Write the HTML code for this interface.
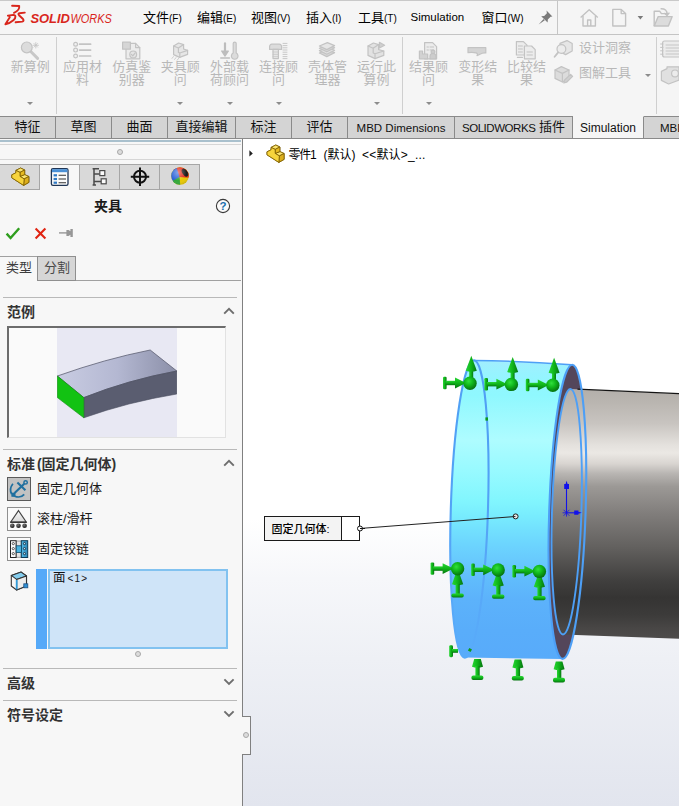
<!DOCTYPE html>
<html lang="zh-CN">
<head>
<meta charset="utf-8">
<title>SOLIDWORKS</title>
<style>
html,body{margin:0;padding:0;}
body{width:679px;height:806px;overflow:hidden;position:relative;background:#f0f0f0;
 font-family:"Liberation Sans","Noto Sans CJK SC",sans-serif;font-size:13px;color:#1a1a1a;}
.abs{position:absolute;}
.t{position:absolute;white-space:nowrap;line-height:1;}
/* title bar */
#titlebar{left:0;top:0;width:679px;height:35px;background:#f5f5f5;border-top:1px solid #c9c9c9;border-bottom:1px solid #c4c4c4;box-sizing:border-box;}
.menu{font-size:13px;color:#000;top:11px;}
.menu small{font-size:10px;}
/* ribbon */
#ribbon{left:0;top:35px;width:679px;height:82px;background:#f5f5f5;}
.rb{color:#b8b8b8;font-size:13px;text-align:center;line-height:12.6px;white-space:normal;}
.dd{width:0;height:0;border-left:3px solid transparent;border-right:3px solid transparent;border-top:3.5px solid #8c8c8c;}
.vsep{width:1px;background:#cfcfcf;}
/* tabs */
#tabs{left:0;top:116px;width:679px;height:23px;background:#f5f5f5;z-index:3;}
.tab{position:absolute;top:0;height:23px;box-sizing:border-box;background:#d4d4d4;border:1px solid #8a8a8a;border-left:none;text-align:center;font-size:13px;line-height:20px;color:#111;white-space:nowrap;overflow:hidden;}
.en{font-size:11.5px;position:relative;top:0.8px;}
.tab.act{background:#f5f5f5;border-top-color:#f5f5f5;}
/* panel */
#panel{left:0;top:138px;width:242px;height:668px;z-index:0;background:#f7f7f7;}
.hl{position:absolute;height:1px;background:#b9b9b9;}
.bold{font-weight:bold;color:#333;}
#view{left:243px;top:138px;width:436px;height:668px;background:linear-gradient(#ffffff 0%,#ffffff 57%,#f6f7fa 66%,#eef0f5 78%,#e2e5ee 100%);}
</style>
</head>
<body>
<!-- TITLE BAR -->
<div id="titlebar" class="abs"></div>
<svg class="abs" style="left:0;top:0" width="130" height="35" viewBox="0 0 130 35">
 <g fill="none" stroke="#d9261c" stroke-width="1.9" stroke-linecap="round" stroke-linejoin="round">
  <path d="M12.1 5.8 L19.2 6.0 C19.6 8.6 17.2 11.4 14 12.8"/>
  <path d="M7.9 15.7 L13.3 14.9 C16 15 16.2 17.8 13.4 20.2 C11 22.2 7.8 23.8 5.4 24.3 L9.8 17.2"/>
  <path d="M24.8 12.6 L19.4 13.2 C18.2 13.4 18.2 14.4 19 15.2 L23 19 C24 20.2 23.6 21.3 22.2 21.6 L15.6 22.3"/>
 </g>
 <text x="30.4" y="23" font-family="Liberation Sans, sans-serif" font-size="13" font-weight="bold" font-style="italic" fill="#d9261c" textLength="39.6" lengthAdjust="spacingAndGlyphs">SOLID</text>
 <text x="70.4" y="23" font-family="Liberation Sans, sans-serif" font-size="13" font-style="italic" fill="#d9261c" textLength="41.4" lengthAdjust="spacingAndGlyphs">WORKS</text>
</svg>
<span class="t menu" style="left:143px">文件<small>(F)</small></span>
<span class="t menu" style="left:197px">编辑<small>(E)</small></span>
<span class="t menu" style="left:251px">视图<small>(V)</small></span>
<span class="t menu" style="left:306px">插入<small>(I)</small></span>
<span class="t menu" style="left:358px">工具<small>(T)</small></span>
<span class="t menu" style="left:410.5px;font-size:11.5px;top:12px">Simulation</span>
<span class="t menu" style="left:481.5px">窗口<small>(W)</small></span>
<svg class="abs" style="left:536px;top:8px" width="20" height="20" viewBox="0 0 20 20">
 <g fill="#7a7a7a" stroke="none"><path d="M10.5 2.6 L16.4 8.4 L14.6 8.8 L11.8 11.6 L11.6 14.6 L5.2 8.2 L8.2 8 L10.9 5.2 Z"/><path d="M7.6 11 L8.8 12.2 L2.6 16.4 Z"/></g>
</svg>
<div class="abs" style="left:557px;top:1px;width:1px;height:33px;background:#c6c6c6"></div>
<svg class="abs" style="left:576px;top:6px" width="103" height="24" viewBox="0 0 103 24">
 <g fill="none" stroke="#c2c2c2" stroke-width="1.4" stroke-linejoin="round">
  <path d="M4.6 11.4 L13.2 3.8 L21.8 11.4"/><path d="M7 10 V20 H19.4 V10"/><path d="M11.6 20 V14 H14.8 V20"/>
  <path d="M36.8 3.4 H45.2 L49.6 7.6 V20 H36.8 Z"/><path d="M45.2 3.4 V7.6 H49.6"/>
  <path d="M78.2 20 V5.2 H83.6 L85.4 7.6 H92"/><path d="M78.2 20 L82.2 10.6 H96.2 L92.4 20 Z" fill="#dcdcdc"/>
  <path d="M84.6 2.8 C89 2.6 91.2 4.6 91 8.4" /><path d="M88.4 7 L91 9.6 L93.4 6.6" />
 </g>
 <path d="M61.6 10 L67.2 10 L64.4 13.4 Z" fill="#7a7a7a"/>
</svg>
<!-- RIBBON -->
<div id="ribbon" class="abs"></div>
<div class="abs rb" style="left:0.3px;top:61px;width:60px">新算例</div>
<div class="abs dd" style="left:27.3px;top:101.5px"></div>
<div class="abs rb" style="left:52.5px;top:61px;width:60px">应用材<br>料</div>
<div class="abs rb" style="left:101.7px;top:61px;width:60px">仿真鉴<br>别器</div>
<div class="abs rb" style="left:150.3px;top:61px;width:60px">夹具顾<br>问</div>
<div class="abs dd" style="left:177.3px;top:101.5px"></div>
<div class="abs rb" style="left:199.5px;top:61px;width:60px">外部载<br>荷顾问</div>
<div class="abs dd" style="left:226.5px;top:101.5px"></div>
<div class="abs rb" style="left:248.6px;top:61px;width:60px">连接顾<br>问</div>
<div class="abs dd" style="left:275.6px;top:101.5px"></div>
<div class="abs rb" style="left:297.4px;top:61px;width:60px">壳体管<br>理器</div>
<div class="abs rb" style="left:346.5px;top:61px;width:60px">运行此<br>算例</div>
<div class="abs dd" style="left:373.5px;top:101.5px"></div>
<div class="abs rb" style="left:398.6px;top:61px;width:60px">结果顾<br>问</div>
<div class="abs dd" style="left:425.6px;top:101.5px"></div>
<div class="abs rb" style="left:447.7px;top:61px;width:60px">变形结<br>果</div>
<div class="abs rb" style="left:496.5px;top:61px;width:60px">比较结<br>果</div>
<div class="abs vsep" style="left:56px;top:37px;height:77px"></div>
<div class="abs vsep" style="left:402px;top:37px;height:77px"></div>
<div class="abs vsep" style="left:656px;top:37px;height:77px"></div>
<div class="abs rb" style="left:579px;top:41.5px;text-align:left;white-space:nowrap">设计洞察</div>
<div class="abs rb" style="left:579px;top:67px;text-align:left;white-space:nowrap">图解工具</div>
<div class="abs dd" style="left:644.5px;top:73.5px"></div>
<svg class="abs" style="left:0;top:36px" width="679" height="56" viewBox="0 36 679 56">
<g fill="#e0e0e0" stroke="#c3c3c3" stroke-width="1.2" stroke-linejoin="round" stroke-linecap="round">
 <!-- 1 magnifier -->
 <path d="M31 51.8 L37.6 58.4" stroke-width="3" stroke="#c8c8c8"/>
 <circle cx="26.8" cy="47.4" r="5.4" fill="#dcdcdc"/>
 <path d="M35.8 42.6 V48 M33.1 45.3 H38.5 M34 43.5 L37.6 47.1 M37.6 43.5 L34 47.1" stroke-width="0.8"/>
 <!-- 2 list -->
 <circle cx="75.6" cy="44.2" r="1.9" fill="#f1f1f1"/><circle cx="75.6" cy="50.1" r="1.9" fill="#f1f1f1"/><circle cx="75.6" cy="56" r="1.9" fill="#f1f1f1"/>
 <path d="M79.6 44.2 H90.6 M79.6 50.1 H90.6 M79.6 56 H90.6" stroke-width="1.7"/>
 <!-- 3 doc check -->
 <path d="M126 43.4 H135.6 L139.8 47.6 V58.8 H126 Z" fill="#ececec"/>
 <path d="M135.6 43.4 V47.6 H139.8" fill="none"/>
 <rect x="122.6" y="42.2" width="7.8" height="7" fill="#d6d6d6"/>
 <circle cx="133.2" cy="54.4" r="3.4" fill="#e4e4e4"/><path d="M131.4 54.4 L132.8 55.9 L135.2 52.8" fill="none"/>
 <!-- 4 bracket -->
 <path d="M173.6 46 L178.6 43 L183.6 44.6 V49 L187.6 50.4 V54.4 L179.6 57.4 L173.6 54.6 Z" fill="#e6e6e6"/>
 <path d="M173.6 46 L178.4 48 L183.6 44.6 M178.4 48 V52.4 L179.8 53 L187.6 50.4 M179.8 53 V57.4" fill="none"/>
 <path d="M173.4 56.6 L172 58.4 M176 57.6 L174.6 59.4 M178.6 58.4 L177.2 60.2" stroke-width="0.8"/>
 <!-- 5 arrow + thermo -->
 <path d="M225 43.4 V52" stroke-width="2.2" stroke="#bdbdbd"/><path d="M221.6 51 H228.4 L225 56.2 Z" fill="#bdbdbd" stroke="#bdbdbd"/><path d="M220.8 58 H229.4" stroke-width="1.6" stroke="#bdbdbd"/>
 <path d="M233.2 43.6 a1.5 1.5 0 0 1 3 0 V53 a3.3 3.3 0 1 1 -3 0 Z" fill="#dcdcdc"/>
 <!-- 6 bolt -->
 <path d="M269.6 46.4 a2.2 2.2 0 0 1 2.2 -2.2 H279.4 a2.2 2.2 0 0 1 2.2 2.2 V49.4 H269.6 Z" fill="#dcdcdc"/>
 <rect x="273" y="49.4" width="5.4" height="9.2" fill="#e6e6e6"/>
 <path d="M273 52 H278.4 M273 54.4 H278.4 M273 56.6 H278.4" stroke-width="0.7"/>
 <path d="M283 43.4 H287 M283 45.6 H287 M283 47.8 H287 M283 50 H287 M283 52.2 H287 M283 54.4 H287 M283 56.6 H287 M283 58.6 H287" stroke-width="0.9"/>
 <!-- 7 layers -->
 <path d="M319.4 53 L327.4 49.6 L334.6 52.6 L326.8 56.6 Z" fill="#d8d8d8"/>
 <path d="M319.4 50.6 L327.4 47.2 L334.6 50.2 L326.8 54.2 Z" fill="#e2e2e2"/>
 <path d="M319.4 48.2 L327.4 44.8 L334.6 47.8 L326.8 51.8 Z" fill="#d8d8d8"/>
 <path d="M319.4 46 L327.4 42.6 L334.6 45.6 L326.8 49.6 Z" fill="#e6e6e6"/>
 <!-- 8 run -->
 <path d="M368 46 L373.4 43 L378.6 44.6 V49.6 L383.8 51 V55.4 L375 58.6 L368 55.4 Z" fill="#e2e2e2"/>
 <path d="M368 46 L373.2 48.2 L378.6 44.6 M373.2 48.2 V53 L375 53.8 L383.8 51 M375 53.8 V58.6" fill="none"/>
 <path d="M379.4 42.4 L384.6 45.2 L379.4 48 Z" fill="#cfcfcf"/>
 <!-- 9 results -->
 <path d="M424.6 42.6 H432.6 L436.6 46.6 V58.8 H424.6 Z" fill="#ececec"/>
 <path d="M427 47 H428.4 M430 47 H433.6 M427 50 H428.4 M430 50 H433.6" stroke-width="1"/>
 <path d="M419.4 51 H422.6 V54 H427.6 V58.8 H419.4 Z" fill="#d2d2d2"/>
 <circle cx="433" cy="52" r="1.9" fill="#cdcdcd"/><path d="M430 58.8 V56.4 a3 3 0 0 1 6 0 V58.8 Z" fill="#cdcdcd"/>
 <!-- 10 deformed -->
 <path d="M468 47.6 H485.8 V53 C481 52.6 479.6 55 477 55.6 C478.6 53 476 52 468 52.6 Z" fill="#d4d4d4"/>
 <!-- 11 compare -->
 <path d="M516.4 41.6 H523.4 L527 45.2 V55 H516.4 Z" fill="#ececec"/>
 <path d="M524.4 46 H531.6 L535.2 49.6 V58.8 H524.4 Z" fill="#ececec"/>
 <path d="M518.4 46 H522.4 M518.4 49 H522.4 M518.4 52 H522.4 M527 52 H532.4 M527 55 H532.4" stroke-width="1"/>
 <path d="M517.4 57.4 H522.4" stroke-width="1.2"/>
 <!-- small 1 -->
 <path d="M560 43.4 L567 40.6 L572.2 43.6 V51 L565.6 54.6 L560 51.6 Z" fill="#e6e6e6"/>
 <circle cx="561.4" cy="49" r="4.4" fill="#ececec"/><path d="M558.2 52.4 L554.6 56.8" stroke-width="1.8"/>
 <!-- small 2 -->
 <path d="M555 70 L561.4 66.6 L569 70 V78.6 L562.4 82 L555 78.4 Z" fill="#dcdcdc"/>
 <path d="M555 70 L562.4 73.4 L569 70 M562.4 73.4 V82" fill="none"/>
 <path d="M564.6 80 L570.6 74.4 L572.6 76.4 L566.6 82.2 L563.8 83 Z" fill="#d0d0d0"/>
 <!-- right -->
 <rect x="662.6" y="41" width="20" height="16" rx="2" fill="#ececec"/>
 <path d="M666 45 H679 M666 48 H679 M666 51 H679 M666 54 H679" stroke-width="0.9"/>
 <path d="M660.6 44 H663 M660.6 47.4 H663 M660.6 50.8 H663 M660.6 54.2 H663" stroke-width="1"/>
 <path d="M661.4 71.4 L667 68.6 V66.8 H679 V80 L668.6 84 L661.4 80.4 Z" fill="#e0e0e0"/>
 <circle cx="675" cy="73.4" r="3.4" fill="#ececec"/>
</g>
</svg>
<!-- TABS -->
<div id="tabs" class="abs">
<div class="tab" style="left:0px;width:56px">特征</div>
<div class="tab" style="left:56px;width:56px">草图</div>
<div class="tab" style="left:112px;width:56px">曲面</div>
<div class="tab" style="left:168px;width:68px">直接编辑</div>
<div class="tab" style="left:236px;width:56px">标注</div>
<div class="tab" style="left:292px;width:56px">评估</div>
<div class="tab" style="left:348px;width:107px"><span class="en">MBD Dimensions</span></div>
<div class="tab" style="left:455px;width:118px"><span class="en" style="letter-spacing:-0.45px">SOLIDWORKS</span> 插件</div>
<div class="tab act" style="left:573px;width:71px"><span class="en" style="font-size:12px">Simulation</span></div>
<div class="tab" style="left:644px;width:60px;text-align:left;padding-left:16px"><span class="en">MBD</span></div>
</div>
<!-- PANEL -->
<div id="panel" class="abs">
 <div class="abs" style="left:0;top:2px;width:241px;height:2px;background:#a9c0cd"></div>
 <div class="hl" style="left:0;top:6px;width:241px;background:#d6d6d6"></div>
 <div class="hl" style="left:0;top:21px;width:241px;background:#d6d6d6"></div>
 <div class="abs" style="left:117px;top:11px;width:5px;height:5px;border-radius:50%;background:#dcdcdc;border:1px solid #a8a8a8;box-sizing:border-box;width:6px;height:6px"></div>
 <!-- panel tabs -->
 <div class="abs" style="left:0;top:26px;width:200px;height:26px;background:#d9d9d9;border:1px solid #a6a6a6;border-left:none;box-sizing:border-box"></div>
 <div class="abs" style="left:39px;top:27px;width:1px;height:24px;background:#a6a6a6"></div>
 <div class="abs" style="left:119px;top:27px;width:1px;height:24px;background:#a6a6a6"></div>
 <div class="abs" style="left:159px;top:27px;width:1px;height:24px;background:#a6a6a6"></div>
 <div class="hl" style="left:0;top:51px;width:241px;background:#a6a6a6"></div>
 <div class="abs" style="left:39px;top:26px;width:41px;height:26px;background:#f7f7f7;border:1px solid #a6a6a6;border-bottom:none;box-sizing:border-box"></div>
 <svg class="abs" style="left:0;top:26px" width="200" height="26" viewBox="0 164 200 26">
  <!-- part icon -->
  <g stroke="#7a5c00" stroke-width="0.8" stroke-linejoin="round">
   <path d="M11.8 174.8 L15.9 172.8 V170.4 L20.6 168 L24.7 170 V174.6 L28.9 176.5 V182.4 L23.6 185.4 L11.8 177.8 Z" fill="#f3c824"/>
   <path d="M15.9 170.4 L20.6 168 L24.7 170 L20 172.4 Z" fill="#fbe46e"/>
   <path d="M20 176.4 L24.7 174.6 L28.9 176.5 L24.2 178.9 Z" fill="#fbe46e"/>
   <path d="M24.2 178.9 L28.9 176.5 V182.4 L23.6 185.4 Z" fill="#dcae1c"/>
   <path d="M20 172.4 L24.7 170 V174.6 L20 176.4 Z" fill="#e6ba20"/>
   <path d="M11.8 174.8 L15.9 172.8 V170.4 L20 172.4 V176.4 L24.2 178.9 L23.6 185.4 L11.8 177.8 Z" fill="#f7d43c"/>
  </g>
  <!-- property manager icon -->
  <rect x="51.4" y="168.6" width="16.6" height="16.8" rx="1.6" fill="#fbfbfb" stroke="#1f3555" stroke-width="1.3"/>
  <rect x="52" y="169.2" width="15.4" height="3" fill="#4a90d6"/>
  <rect x="53.6" y="174.2" width="3.4" height="2.2" fill="#2f79c4"/><rect x="53.6" y="177.9" width="3.4" height="2.2" fill="#2f79c4"/><rect x="53.6" y="181.6" width="3.4" height="2.2" fill="#2f79c4"/>
  <path d="M58.6 175.3 H66 M58.6 179 H66 M58.6 182.7 H66" stroke="#333" stroke-width="1.1"/>
  <!-- config icon -->
  <g fill="none" stroke="#4a4a4a" stroke-width="1.5">
   <path d="M94 168.4 V185.6 M92.6 168.8 H99 M92.6 185 H96 M94 174 H99.6 M94 181.4 H101"/>
   <rect x="99.8" y="170.6" width="5" height="5" fill="#fbfbfb" stroke-width="1.2"/>
   <rect x="101.2" y="178.8" width="5" height="5" fill="#fbfbfb" stroke-width="1.2"/>
  </g>
  <!-- crosshair -->
  <circle cx="140" cy="176.8" r="6" fill="none" stroke="#111" stroke-width="2"/>
  <path d="M140 167.6 V186 M130.8 176.8 H149.2" stroke="#111" stroke-width="2"/>
  <!-- colour ball -->
  <defs><clipPath id="ballc"><circle cx="180" cy="176" r="8.8"/></clipPath>
  <radialGradient id="ballg" cx="0.4" cy="0.3" r="0.8"><stop offset="0" stop-color="#fff" stop-opacity="0.45"/><stop offset="0.6" stop-color="#fff" stop-opacity="0"/><stop offset="1" stop-color="#000" stop-opacity="0.25"/></radialGradient></defs>
  <g clip-path="url(#ballc)">
   <rect x="170" y="166" width="20" height="20" fill="#e8c800"/>
   <path d="M170 166 H192 V178 L179 177 L172 168 Z" fill="#e02818"/>
   <path d="M170 166 L176 166 L179.6 177 L171 184 L170 184 Z" fill="#2a62d8"/>
   <path d="M171 186 L170.4 182 L179.6 177 L180.4 188 Z" fill="#30a838"/>
   <ellipse cx="185" cy="172.6" rx="2.6" ry="4.4" transform="rotate(-35 185 172.6)" fill="#1a1a1a"/>
   <circle cx="180" cy="176" r="8.8" fill="url(#ballg)"/>
  </g>
 </svg>
 <!-- title -->
 <span class="t" style="left:94px;top:60.5px;font-size:14px;font-weight:bold;color:#1a1a1a">夹具</span>
 <svg class="abs" style="left:214px;top:59px" width="18" height="18" viewBox="0 0 18 18">
  <circle cx="9" cy="9" r="6.6" fill="#fafafa" stroke="#3a3a3a" stroke-width="1.1"/>
  <text x="9" y="13" text-anchor="middle" font-family="Liberation Sans, sans-serif" font-weight="bold" font-size="11.5" fill="#1a6fae">?</text>
 </svg>
 <svg class="abs" style="left:0;top:86px" width="80" height="18" viewBox="0 224 80 18">
  <path d="M6.6 233.6 L10.6 238 L19.2 228.2" fill="none" stroke="#2f9e1e" stroke-width="2.4" stroke-linejoin="miter"/>
  <path d="M35.6 228.6 L45.4 238.4 M45.4 228.6 L35.6 238.4" fill="none" stroke="#e02412" stroke-width="2.1"/>
  <g fill="#979797" stroke="none"><rect x="59" y="232.2" width="8" height="1.4"/><path d="M66.4 230 H68.6 L70.4 231.2 V229 H72.8 V237 H70.4 V234.8 L68.6 236 H66.4 Z"/></g>
 </svg>
 <!-- type tabs -->
 <div class="hl" style="left:0;top:118px;width:38px;background:#a0a0a0"></div>
 <div class="abs" style="left:37px;top:118px;width:39px;height:25px;background:#d6d6d6;border:1px solid #8f8f8f;box-sizing:border-box"></div>
 <div class="hl" style="left:76px;top:142px;width:165px;background:#a0a0a0"></div>
 <span class="t" style="left:6px;top:123px;font-size:13px;color:#3c3c3c">类型</span>
 <span class="t" style="left:44px;top:123px;font-size:13px;color:#4a4a4a">分割</span>
 <!-- example -->
 <div class="hl" style="left:3px;top:159px;width:234px"></div>
 <span class="t bold" style="left:7px;top:166.5px;font-size:14px">范例</span>
 <svg class="abs" style="left:222px;top:168px" width="14" height="10" viewBox="0 0 14 10"><path d="M2.2 7.6 L7 2.8 L11.8 7.6" fill="none" stroke="#6e6e6e" stroke-width="1.9"/></svg>
 <div class="abs" style="left:7px;top:188px;width:219px;height:112px;box-sizing:border-box;background:#fafafa;border-top:2px solid #6c6c6c;border-left:2px solid #6c6c6c;border-right:1px solid #e2e2e2;border-bottom:1px solid #e2e2e2"></div>
 <svg class="abs" style="left:57px;top:190px" width="120" height="109" viewBox="57 328 120 109">
  <defs><linearGradient id="blk" x1="0" y1="0" x2="1" y2="0"><stop offset="0" stop-color="#c9cce2"/><stop offset="0.5" stop-color="#b4b8d2"/><stop offset="1" stop-color="#8b8fa8"/></linearGradient></defs>
  <rect x="57" y="328" width="120" height="109" fill="#e8e8f3"/>
  <path d="M57.4 376 Q105 359 150.2 350 L176.8 371 Q128 380 83.8 397.6 Z" fill="url(#blk)" stroke="#5d6072" stroke-width="0.8"/>
  <path d="M83.8 397.6 Q128 380 176.8 371 V394 Q128 402 83.8 417.8 Z" fill="#5a5d70" stroke="#4a4d5e" stroke-width="0.6"/>
  <path d="M57.4 376 L83.8 397.6 V417.8 L57.4 397.6 Z" fill="#12c212" stroke="#0a8a0a" stroke-width="0.6"/>
 </svg>
 <!-- standard -->
 <div class="hl" style="left:3px;top:311px;width:234px"></div>
 <span class="t bold" style="left:7px;top:318.5px;font-size:14px;word-spacing:-2px">标准 (固定几何体)</span>
 <svg class="abs" style="left:222px;top:320px" width="14" height="10" viewBox="0 0 14 10"><path d="M2.2 7.6 L7 2.8 L11.8 7.6" fill="none" stroke="#6e6e6e" stroke-width="1.9"/></svg>
 <div class="abs" style="left:7px;top:339px;width:24px;height:24px;box-sizing:border-box;background:#c2c2c2;border:1px solid #5a5a5a"></div>
 <div class="abs" style="left:7px;top:369px;width:24px;height:24px;box-sizing:border-box;background:#fafafa;border:1px solid #8f8f8f"></div>
 <div class="abs" style="left:7px;top:399px;width:24px;height:24px;box-sizing:border-box;background:#fafafa;border:1px solid #8f8f8f"></div>
 <svg class="abs" style="left:7px;top:339px" width="24" height="84" viewBox="7 477 24 84">
  <!-- anchor -->
  <g fill="none" stroke="#1f6f9f" stroke-width="2.1" stroke-linecap="butt">
   <circle cx="25.6" cy="482.4" r="1.7" stroke-width="1.5"/>
   <path d="M24.3 483.8 L14.6 493"/><path d="M17.4 482.4 L25.4 490.2"/>
   <path d="M12.9 483.8 C10.4 487 10 491 11.6 494.2" stroke-width="1.7"/>
   <path d="M14.6 496.2 C18.4 497.6 22 497 24.2 494.4" stroke-width="1.7"/>
   <path d="M11.2 492.8 L15.4 492.6 L15.6 497 L11.4 496.8 Z" fill="#1f6f9f" stroke="none"/>
  </g>
  <!-- roller -->
  <defs><linearGradient id="trg" x1="0" y1="0" x2="0" y2="1"><stop offset="0" stop-color="#fafafa"/><stop offset="1" stop-color="#d8d8d8"/></linearGradient>
  <radialGradient id="blb" cx="0.4" cy="0.35" r="0.7"><stop offset="0" stop-color="#777"/><stop offset="1" stop-color="#111"/></radialGradient>
  <linearGradient id="hng" x1="0" y1="0" x2="1" y2="0"><stop offset="0" stop-color="#58bce6"/><stop offset="1" stop-color="#2a86b6"/></linearGradient></defs>
  <path d="M18.5 510.6 L26.2 522 H10.8 Z" fill="url(#trg)" stroke="#444" stroke-width="1.1"/>
  <path d="M10.2 522.3 H26.8" stroke="#333" stroke-width="1.3"/>
  <circle cx="12.3" cy="525.7" r="2.3" fill="url(#blb)"/><circle cx="18.5" cy="525.7" r="2.3" fill="url(#blb)"/><circle cx="24.6" cy="525.7" r="2.3" fill="url(#blb)"/>
  <!-- hinge -->
  <rect x="16" y="541" width="5.2" height="16.2" fill="#e4e4e4" stroke="#666" stroke-width="0.6"/>
  <rect x="10.5" y="540.7" width="5.6" height="16.8" fill="#fafafa" stroke="#222" stroke-width="1"/>
  <rect x="21.3" y="540.7" width="6.4" height="16.8" fill="url(#hng)" stroke="#0d3c58" stroke-width="1"/>
  <rect x="16.2" y="545.8" width="5.2" height="6.8" fill="#4ab2de" stroke="#0d4a6c" stroke-width="0.8"/>
  <g fill="#fff" stroke="#333" stroke-width="0.8"><circle cx="13.3" cy="543.6" r="1.1"/><circle cx="13.3" cy="548.6" r="1.1"/><circle cx="13.3" cy="553.6" r="1.1"/></g>
  <g fill="#bfe4f4" stroke="#123" stroke-width="0.8"><circle cx="24.5" cy="543.6" r="1.1"/><circle cx="24.5" cy="548.6" r="1.1"/><circle cx="24.5" cy="553.6" r="1.1"/></g>
 </svg>
 <span class="t" style="left:37px;top:343.5px;font-size:13px">固定几何体</span>
 <span class="t" style="left:37px;top:373.5px;font-size:13px">滚柱/滑杆</span>
 <span class="t" style="left:37px;top:403.5px;font-size:13px">固定铰链</span>
 <!-- selection box -->
 <div class="abs" style="left:36px;top:431px;width:11px;height:80px;background:#55a9f8"></div>
 <div class="abs" style="left:48px;top:431px;width:180px;height:80px;box-sizing:border-box;background:#cfe4f8;border:2px solid #82c2f0"></div>
 <span class="t" style="left:53px;top:433.5px;font-size:12.5px;color:#111">面<span style="font-size:10px;letter-spacing:1.2px;margin-left:2px;position:relative;top:0px">&lt;1&gt;</span></span>
 <svg class="abs" style="left:8px;top:432px" width="22" height="22" viewBox="8 570 22 22">
  <g stroke="#333" stroke-width="1.1" stroke-linejoin="round">
   <path d="M11.3 575.4 L21.2 572.1 L26.5 576 V586 L16.6 590 L11.3 586 Z" fill="#f6f6f6"/>
   <path d="M11.3 575.4 L21.2 572.1 L26.5 576 L16.6 579.4 Z" fill="#84cdee"/>
   <path d="M16.6 579.4 L26.5 576 V586 L16.6 590 Z" fill="#ececec"/>
  </g>
  <path d="M16.7 580 V589.4" stroke="#2f9ad8" stroke-width="1.8"/>
  <rect x="23.8" y="583.8" width="4" height="4" fill="#2f8fd4" stroke="#1c4f80" stroke-width="0.8"/>
 </svg>
 <div class="abs" style="left:135px;top:513px;width:6px;height:6px;border-radius:50%;background:#dcdcdc;border:1px solid #a8a8a8;box-sizing:border-box"></div>
 <div class="hl" style="left:3px;top:530px;width:234px"></div>
 <span class="t bold" style="left:7px;top:537.5px;font-size:14px">高级</span>
 <svg class="abs" style="left:222px;top:539px" width="14" height="10" viewBox="0 0 14 10"><path d="M2.4 2.4 L7 7 L11.6 2.4" fill="none" stroke="#6e6e6e" stroke-width="1.9"/></svg>
 <div class="hl" style="left:3px;top:562px;width:234px"></div>
 <span class="t bold" style="left:7px;top:569.5px;font-size:14px">符号设定</span>
 <svg class="abs" style="left:222px;top:571px" width="14" height="10" viewBox="0 0 14 10"><path d="M2.4 2.4 L7 7 L11.6 2.4" fill="none" stroke="#6e6e6e" stroke-width="1.9"/></svg>
</div>
<!-- VIEW -->
<div id="view" class="abs"></div>
<svg class="abs" style="left:243px;top:138px" width="436" height="668" viewBox="243 138 436 668">
 <defs>
  <linearGradient id="bandg" gradientUnits="userSpaceOnUse" x1="0" y1="360" x2="0" y2="660">
   <stop offset="0" stop-color="#a2eefe"/><stop offset="0.05" stop-color="#96f4ff"/><stop offset="0.117" stop-color="#8ff8fe"/>
   <stop offset="0.267" stop-color="#aefcff"/><stop offset="0.367" stop-color="#98faff"/><stop offset="0.467" stop-color="#82f6fe"/>
   <stop offset="0.52" stop-color="#78ecfe"/><stop offset="0.567" stop-color="#72e0fe"/><stop offset="0.617" stop-color="#6cd4fe"/>
   <stop offset="0.667" stop-color="#68cafd"/><stop offset="0.733" stop-color="#60bcfc"/><stop offset="0.8" stop-color="#5cb2fb"/>
   <stop offset="0.9" stop-color="#59adfa"/><stop offset="1" stop-color="#58abfa"/>
  </linearGradient>
  <linearGradient id="cylg" gradientUnits="userSpaceOnUse" x1="0" y1="388" x2="0" y2="640">
   <stop offset="0" stop-color="#b2aeaa"/><stop offset="0.06" stop-color="#bab6b1"/><stop offset="0.14" stop-color="#c8c4c0"/><stop offset="0.226" stop-color="#e4e1dd"/>
   <stop offset="0.258" stop-color="#ebe8e4"/><stop offset="0.30" stop-color="#d9d5d1"/><stop offset="0.34" stop-color="#b8b5b2"/><stop offset="0.39" stop-color="#9c9996"/>
   <stop offset="0.5" stop-color="#807d7b"/><stop offset="0.63" stop-color="#63615f"/><stop offset="0.766" stop-color="#403f3e"/>
   <stop offset="0.833" stop-color="#353433"/><stop offset="0.9" stop-color="#3c3b3a"/><stop offset="0.952" stop-color="#484645"/><stop offset="1" stop-color="#4e4c4b"/>
  </linearGradient>
  <linearGradient id="seamg" gradientUnits="userSpaceOnUse" x1="0" y1="360" x2="0" y2="660"><stop offset="0" stop-color="#4f9ff4"/><stop offset="0.5" stop-color="#53a3f6"/><stop offset="0.75" stop-color="#58a8f8"/><stop offset="1" stop-color="#58abfa"/></linearGradient>
  <radialGradient id="sph" cx="0.4" cy="0.35" r="0.7"><stop offset="0" stop-color="#30e03c"/><stop offset="0.45" stop-color="#10b61c"/><stop offset="1" stop-color="#056a0e"/></radialGradient>
  <linearGradient id="gh" x1="0" y1="0" x2="0" y2="1"><stop offset="0" stop-color="#28d634"/><stop offset="0.5" stop-color="#0fb41a"/><stop offset="1" stop-color="#067410"/></linearGradient>
  <linearGradient id="gv" x1="0" y1="0" x2="1" y2="0"><stop offset="0" stop-color="#28d634"/><stop offset="0.5" stop-color="#0fb41a"/><stop offset="1" stop-color="#067410"/></linearGradient>
  <g id="rodL">
   <rect x="-27" y="-6.4" width="3.6" height="12.4" rx="1.2" fill="url(#gv)"/>
   <rect x="-24.5" y="-2.4" width="11.5" height="4.4" fill="url(#gh)"/>
   <path d="M-15 -5.6 L-4 -0.2 L-15 5.2 Z" fill="url(#gh)"/>
  </g>
  <g id="symTop">
   <use href="#rodL"/>
   <rect x="-0.8" y="-15" width="4" height="11" fill="url(#gv)"/>
   <path d="M-4.2 -12.4 L1.3 -27.4 L6.8 -12.4 Q1.3 -10.4 -4.2 -12.4 Z" fill="url(#gv)"/>
   <circle cx="0" cy="0" r="6.7" fill="url(#sph)"/>
  </g>
  <g id="symMid">
   <use href="#rodL"/>
   <path d="M-5.6 15.4 L-1.2 3 H1.2 L5.6 15.4 Q0 17.6 -5.6 15.4 Z" fill="url(#gv)"/>
   <rect x="-2" y="15" width="4.2" height="11" fill="url(#gv)"/>
   <rect x="-6.2" y="24.6" width="12.4" height="4.2" rx="1.8" fill="url(#gh)"/>
   <circle cx="0" cy="0" r="6.7" fill="url(#sph)"/>
  </g>
  <g id="symBot">
   <path d="M-5.4 7.8 L-3.2 0 H3.4 L5.6 7.8 Q0 9.6 -5.4 7.8 Z" fill="url(#gv)"/>
   <rect x="-2" y="7" width="4.3" height="10.6" fill="url(#gv)"/>
   <rect x="-6" y="16.4" width="12" height="4.6" rx="2" fill="url(#gh)"/>
  </g>
  <clipPath id="vclip"><rect x="243" y="138" width="436" height="668"/></clipPath>
 </defs>
 <g clip-path="url(#vclip)">
  <!-- band body -->
  <g fill="url(#bandg)">
   <ellipse cx="469.4" cy="509" rx="18.6" ry="148.8" transform="rotate(1.77 469.4 509)"/>
   <path d="M473.8 360.2 L571.6 364.6 L561.8 658.9 L464.8 657.6 Z"/>
   <ellipse cx="567.4" cy="511.8" rx="18.2" ry="147.2" transform="rotate(1.9 567.4 511.8)"/>
  </g>
  <!-- ring end face -->
  <ellipse cx="567.4" cy="511.8" rx="18.2" ry="147.2" transform="rotate(1.9 567.4 511.8)" fill="#54465a"/>
  <!-- cylinder -->
  <g fill="url(#cylg)">
   <ellipse cx="566.7" cy="511.8" rx="14.7" ry="122.8" transform="rotate(1.75 566.7 511.8)"/>
   <path d="M570.6 389 L680 394 V638.8 L563 634.6 Z"/>
  </g>
  <path d="M577.5 389.1 L680 393.6" stroke="#141414" stroke-width="1.3" fill="none"/>
  <!-- blue edges -->
  <g fill="none" stroke="#4d9ff6" stroke-width="2.1">
   <path d="M473.8 360.4 Q522 360.8 571.6 364.8" stroke-width="1.5"/>
   <ellipse cx="469.4" cy="509" rx="18.6" ry="148.8" transform="rotate(1.77 469.4 509)" stroke="url(#seamg)"/>
   <ellipse cx="567.4" cy="511.8" rx="18.2" ry="147.2" transform="rotate(1.9 567.4 511.8)"/>
   <ellipse cx="566.7" cy="511.8" rx="14.7" ry="122.8" transform="rotate(1.75 566.7 511.8)" stroke-width="1.9"/>
  </g>
  <!-- leader -->
  <circle cx="515.6" cy="516.4" r="2.5" fill="#e4e4e4" stroke="#222" stroke-width="1"/>
  <path d="M361 528.4 L515.4 516.5" stroke="#222" stroke-width="1" fill="none"/>
  <!-- triad -->
  <g stroke="#1212ea" fill="#1212ea" stroke-width="1.1">
   <path d="M566.5 513 V488" fill="none"/><path d="M566.6 480.8 L567.6 484 H569 V489 H564.2 V484 H565.6 Z" stroke="none"/>
   <path d="M566.5 512.8 H575" fill="none"/><path d="M581.8 512.8 L578.4 511.8 V510.6 H574.2 V514.8 H578.4 V513.8 Z" stroke="none"/>
   <path d="M563.6 509.8 L569.4 515.8 M569.4 509.8 L563.6 515.8 M562.6 512.8 H566 M566.5 513 V516.6" stroke-width="0.8" fill="none"/>
  </g>
  <!-- fixture symbols -->
  <rect x="485.4" y="417.4" width="2.6" height="3.2" fill="#0c9a1a"/>
  <rect x="468.4" y="648.4" width="3" height="3" fill="#0c9a1a" transform="rotate(30 469.8 650)"/>
  <use href="#symTop" x="470" y="383.2"/><use href="#symTop" x="511.4" y="384.4"/><use href="#symTop" x="552.8" y="385.2"/>
  <use href="#symMid" x="457.6" y="568.8"/><use href="#symMid" x="498.2" y="570"/><use href="#symMid" x="539.4" y="571.4"/>
  <use href="#symBot" x="477.4" y="659"/><use href="#symBot" x="517.8" y="659.6"/><use href="#symBot" x="559" y="661.4"/>
  <rect x="449.2" y="645.2" width="3.8" height="12" rx="1.4" fill="url(#gv)"/><rect x="452" y="649" width="6" height="3.8" fill="url(#gh)"/>
 </g>
</svg>
<!-- callout -->
<div class="abs" style="left:264px;top:516px;width:96px;height:25px;box-sizing:border-box;border:1px solid #1a1a1a;background:#fff"></div>
<div class="abs" style="left:265px;top:517px;width:76px;height:23px;background:#f3f3f3;border-right:1px solid #1a1a1a"></div>
<span class="t" style="left:271.5px;top:524px;font-size:11px;color:#000;font-weight:500">固定几何体:</span>
<svg class="abs" style="left:355px;top:523px" width="10" height="11" viewBox="0 0 10 11"><circle cx="5" cy="5.5" r="2.5" fill="#fff" stroke="#111" stroke-width="1"/><path d="M5 5.5 H10" stroke="#111" stroke-width="1"/></svg>
<!-- tree -->
<svg class="abs" style="left:246px;top:142px" width="44" height="22" viewBox="246 142 44 22">
 <path d="M249.4 150.2 L252.8 153.4 L249.4 156.6 Z" fill="#222"/>
 <g stroke="#7a5c00" stroke-width="0.8" stroke-linejoin="round" transform="translate(255.2 -23)">
   <path d="M11.8 174.8 L15.9 172.8 V170.4 L20.6 168 L24.7 170 V174.6 L28.9 176.5 V182.4 L23.6 185.4 L11.8 177.8 Z" fill="#f3c824"/>
   <path d="M15.9 170.4 L20.6 168 L24.7 170 L20 172.4 Z" fill="#fbe46e"/>
   <path d="M20 176.4 L24.7 174.6 L28.9 176.5 L24.2 178.9 Z" fill="#fbe46e"/>
   <path d="M24.2 178.9 L28.9 176.5 V182.4 L23.6 185.4 Z" fill="#dcae1c"/>
   <path d="M20 172.4 L24.7 170 V174.6 L20 176.4 Z" fill="#e6ba20"/>
   <path d="M11.8 174.8 L15.9 172.8 V170.4 L20 172.4 V176.4 L24.2 178.9 L23.6 185.4 L11.8 177.8 Z" fill="#f7d43c"/>
 </g>
</svg>
<span class="t" style="left:288.5px;top:149px;font-size:12px;color:#000;letter-spacing:-1.2px">零件1</span>
<span class="t" style="left:323.5px;top:149px;font-size:12px;color:#000;">(默认)</span>
<span class="t" style="left:362px;top:149px;font-size:12px;color:#000;letter-spacing:0.2px">&lt;&lt;默认&gt;_...</span>
<!-- splitter handle -->
<div class="abs" style="left:242px;top:716px;width:9px;height:39px;box-sizing:border-box;background:#f7f7f7;border:1px solid #808080;border-left:none;z-index:4"></div>
<div class="abs" style="left:243px;top:732px;width:6px;height:6px;z-index:5;border-radius:50%;box-sizing:border-box;background:#dcdcdc;border:1px solid #a8a8a8"></div>
<div class="abs" style="left:242px;top:138px;width:1px;height:668px;background:#808080;"></div>
</body>
</html>
